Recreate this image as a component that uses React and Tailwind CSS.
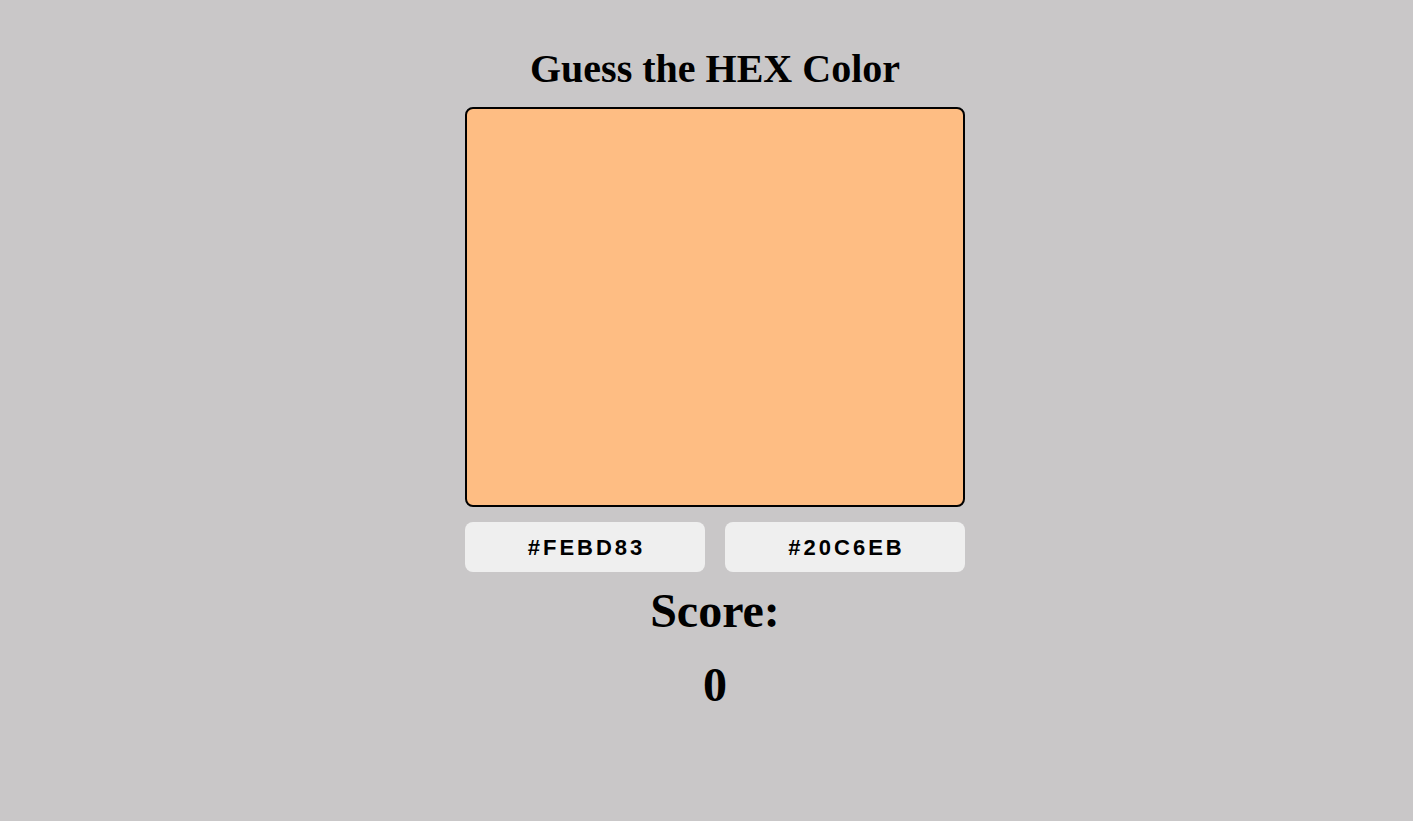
import React, { useState } from "react";

export default function App() {
  const [target] = useState("#FEBD83");
  const [options] = useState(["#FEBD83", "#20C6EB"]);
  const [score, setScore] = useState(0);

  const pick = (hex) => {
    setScore(hex === target ? score + 1 : 0);
  };

  return (
    <div className="min-h-screen w-full bg-[#c9c7c8] pl-[17px] flex flex-col items-center font-['Liberation_Serif',serif] text-black">
      <h1 className="mt-[49px] text-[40px] leading-none font-bold">Guess the HEX Color</h1>

      {/* colour swatch */}
      <div
        className="mt-[18px] w-[500px] h-[400px] rounded-lg border-2 border-black"
        style={{ backgroundColor: target }}
      />

      <div className="mt-[15px] flex gap-5">
        {options.map((hex) => (
          <button
            key={hex}
            onClick={() => pick(hex)}
            className="w-[240px] h-[50px] rounded-lg bg-[#efefef] font-['Liberation_Sans',sans-serif] text-[22px] font-bold tracking-[3px] pl-[3px]"
          >
            {hex}
          </button>
        ))}
      </div>

      <h2 className="mt-[15px] text-[48px] leading-none font-bold">Score:</h2>
      <p className="mt-[26px] text-[48px] leading-none font-bold">{score}</p>
    </div>
  );
}
